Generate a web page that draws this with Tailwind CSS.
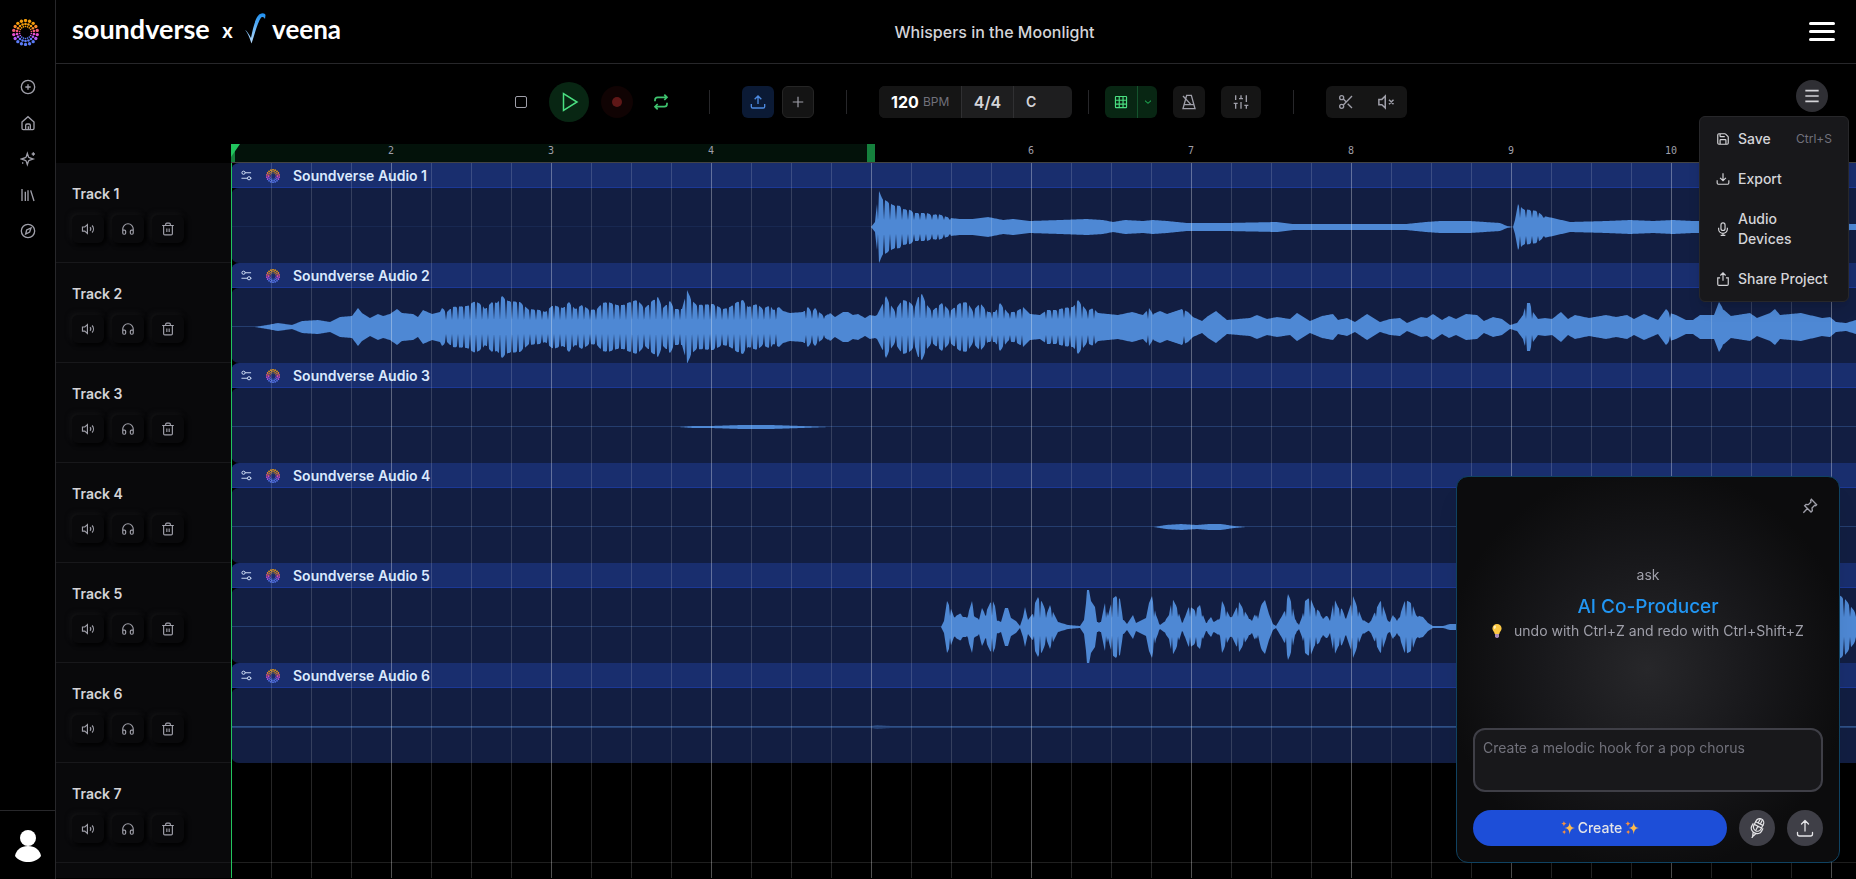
<!DOCTYPE html>
<html lang="en">
<head>
  <meta charset="UTF-8">
  <meta name="viewport" content="width=device-width, initial-scale=1.0">
  <title>Whispers in the Moonlight</title>
  <script src="https://cdn.jsdelivr.net/npm/@tailwindcss/browser@4"></script>
</head>
<body class="bg-black text-zinc-300 font-['Inter',sans-serif] text-sm h-screen overflow-hidden flex">

  <!-- icon sprite -->
  <svg class="hidden">
    <symbol id="i-plus-circle" viewBox="0 0 24 24"><circle cx="12" cy="12" r="10"/><path d="M8 12h8M12 8v8"/></symbol>
    <symbol id="i-home" viewBox="0 0 24 24"><path d="M3 10.500 12 2.500l9 8V20a2 2 0 0 1-2 2H5a2 2 0 0 1-2-2z"/><path d="M8.500 22v-6.500a2 2 0 0 1 2-2h3a2 2 0 0 1 2 2V22M12.500 17v5"/></symbol>
    <symbol id="i-sparkles" viewBox="0 0 24 24"><path d="M11 3.500 9.300 8.800a2 2 0 0 1-1.300 1.300L2.500 12l5.500 1.900a2 2 0 0 1 1.300 1.300L11 20.500l1.700-5.300a2 2 0 0 1 1.300-1.300l5.500-1.900-5.500-1.900a2 2 0 0 1-1.300-1.300z"/><path d="M20 2v5M22.500 4.500h-5M4 17v2M5 18H3"/></symbol>
    <symbol id="i-library" viewBox="0 0 24 24"><path d="m16 5 5 16M12 5v16M8 7v14M3 3v18"/></symbol>
    <symbol id="i-compass" viewBox="0 0 24 24"><circle cx="12" cy="12" r="10"/><path d="m16.500 7.500-2 6-6 3 1.500-6z"/></symbol>
    <symbol id="i-volume" viewBox="0 0 24 24"><path d="M11 4.500 6.500 8.500H2.500v7h4l4.500 4zM15.500 9a4.500 4.500 0 0 1 0 6M19 6a9 9 0 0 1 0 12"/></symbol>
    <symbol id="i-headphones" viewBox="0 0 24 24"><path d="M3 14h3a2 2 0 0 1 2 2v3a2 2 0 0 1-2 2H5a2 2 0 0 1-2-2v-7a9 9 0 0 1 18 0v7a2 2 0 0 1-2 2h-1a2 2 0 0 1-2-2v-3a2 2 0 0 1 2-2h3"/></symbol>
    <symbol id="i-trash" viewBox="0 0 24 24"><path d="M2 6h20M4.500 6v14a2 2 0 0 0 2 2h11a2 2 0 0 0 2-2V6M8 6V4a2 2 0 0 1 2-2h4a2 2 0 0 1 2 2v2M10 11v6M14 11v6"/></symbol>
    <symbol id="i-loop" viewBox="0 0 24 24"><path d="m17 1 4 4-4 4M3 11V9a4 4 0 0 1 4-4h14M7 23l-4-4 4-4M21 13v2a4 4 0 0 1-4 4H3"/></symbol>
    <symbol id="i-upload" viewBox="0 0 24 24"><path d="M12 15V3M7 8l5-5 5 5M2 15v4a2 2 0 0 0 2 2h16a2 2 0 0 0 2-2v-4"/></symbol>
    <symbol id="i-download" viewBox="0 0 24 24"><path d="M12 2v12M7 10l5 5 5-5M2 14v5a2 2 0 0 0 2 2h16a2 2 0 0 0 2-2v-5"/></symbol>
    <symbol id="i-share" viewBox="0 0 24 24"><path d="M12 15V2M7.500 6 12 1.500 16.500 6M7 10H3v11a2 2 0 0 0 2 2h14a2 2 0 0 0 2-2V10h-4"/></symbol>
    <symbol id="i-save" viewBox="0 0 24 24"><path d="M15.200 3a2 2 0 0 1 1.400.6l3.800 3.800a2 2 0 0 1 .6 1.400V19a2 2 0 0 1-2 2H5a2 2 0 0 1-2-2V5a2 2 0 0 1 2-2zM17 21v-7a1 1 0 0 0-1-1H8a1 1 0 0 0-1 1v7M7 3v4a1 1 0 0 0 1 1h7"/></symbol>
    <symbol id="i-mic" viewBox="0 0 24 24"><rect x="8.500" y="1.500" width="7" height="13" rx="3.500"/><path d="M4.500 10v2a7.500 7.500 0 0 0 15 0v-2M12 19.500V23M8 23h8"/></symbol>
    <symbol id="i-plus" viewBox="0 0 24 24"><path d="M12 3v18M3 12h18"/></symbol>
    <symbol id="i-grid" viewBox="0 0 24 24"><rect x="2.500" y="2.500" width="19" height="19" rx="1"/><path d="M2.500 9h19M2.500 15.500h19M9 2.500v19M15.500 2.500v19"/></symbol>
    <symbol id="i-chevron" viewBox="0 0 24 24"><path d="m3 8 9 8 9-8"/></symbol>
    <symbol id="i-metronome" viewBox="0 0 24 24"><path d="M8.500 2h7L21 22H3zM5 16h14M3 3l12 13"/></symbol>
    <symbol id="i-mixer" viewBox="0 0 24 24"><path d="M4 22v-8M4 9V2M12 22V12M12 7V2M20 22v-5M20 12V2M1 14h6M9 7h6M17 17h6"/></symbol>
    <symbol id="i-scissors" viewBox="0 0 24 24"><circle cx="5.500" cy="5.500" r="3"/><circle cx="5.500" cy="18.500" r="3"/><path d="M21 3 8 16.500M14.500 14.500 21 21M8 7.500l4.500 4.500"/></symbol>
    <symbol id="i-muted" viewBox="0 0 24 24"><path d="M11 4 6.500 8.500H2.500v7h4L11 20zM22 9l-6 6M16 9l6 6"/></symbol>
    <symbol id="i-menu" viewBox="0 0 24 24"><path d="M2 4h20M2 12h20M2 20h20"/></symbol>
    <symbol id="i-pin" viewBox="0 0 24 24"><path d="m14 2 8 8-1.500 1.500-1.500-.5-4 4 .5 4-2 2L4 11.500l2-2 3.500.5L13.500 6 13 3.500zM8.500 15.500 2 22"/></symbol>
    <symbol id="i-clip" viewBox="0 0 24 24"><circle cx="5.500" cy="6" r="3.500"/><path d="M9 6h13"/><circle cx="17.500" cy="18" r="3.500"/><path d="M1 18h13M21 18h2"/></symbol>
    <symbol id="i-stars" viewBox="0 0 24 24"><path fill="#fdba4d" d="M15 2c1 7 3 9 9 10-6 1-8 3-9 11-1-8-3-10-9-11 6-1 8-3 9-10z"/><path fill="#fb923c" d="M5 0c.5 3 1.500 4 4.500 4.500C6.500 5 5.500 6.500 5 9c-.5-2.500-1.500-4-4.500-4.500C3.500 4 4.500 3 5 0zM5.500 15c.5 2.500 1.500 3.500 4 4-2.500.5-3.500 1.500-4 4-.5-2.500-1.500-3.500-4-4 2.500-.5 3.500-1.500 4-4z"/></symbol>
    <!-- ring of dots, filled in by drawRing() -->
    <symbol id="i-ring" viewBox="0 0 52 52"></symbol>
  </svg>

  <nav class="w-14 shrink-0 border-r border-zinc-800 flex flex-col items-center">
    <a href="#" aria-label="Soundverse" class="pt-[19px] pr-1"><svg class="size-[27px]"><use href="#i-ring"/></svg></a>
    <div id="nav-links" class="mt-[33px] flex flex-col gap-5 text-zinc-400"></div>
    <a href="#" aria-label="Profile" class="mt-auto w-full h-[69px] border-t border-zinc-800 flex justify-center pt-[19px]">
      <svg class="w-[28px] h-8" viewBox="0 0 28 32" fill="#fff"><circle cx="14" cy="8" r="8"/><path d="M1 26C2 20 7 16 14 16s12 4 13 10c-3 4-8 6-13 6S4 30 1 26z"/></svg>
    </a>
  </nav>

  <div class="flex-1 min-w-0 flex flex-col">
    <header class="h-16 shrink-0 border-b border-zinc-800 grid grid-cols-[1fr_auto_1fr] items-center pl-4 pr-[21px]">
      <div class="flex items-center text-white font-['Lato',sans-serif] font-bold pb-[6px]">
        <span class="text-[27px] leading-8">soundverse</span>
        <span class="text-xl leading-8 ml-3 pt-1 font-['Inter',sans-serif] font-semibold">x</span>
        <svg class="w-[21px] h-[31px] ml-3" viewBox="0 0 21 31">
          <defs><linearGradient id="tick" x1="0" y1="0" x2="0" y2="1"><stop offset="0" stop-color="#1d8ff0"/><stop offset="1" stop-color="#b9dcfb"/></linearGradient></defs>
          <path fill="url(#tick)" d="M0 17c2 1 4 4 6 8C8 14 11 3 15 1c3-1.500 5-.5 5.500 1l-.5 4c-1-2-3-3-4.500-.5C12 11 9 24 6.500 30.500 5 26 3 20 0 17z"/>
        </svg>
        <span class="text-[26px] leading-8 ml-[6px]">veena</span>
      </div>
      <h1 class="text-base font-medium text-zinc-300 pl-[82px]">Whispers in the Moonlight</h1>
      <button aria-label="Menu" class="justify-self-end flex flex-col gap-[5px]">
        <span class="w-[26px] h-[3px] rounded bg-white"></span>
        <span class="w-[26px] h-[3px] rounded bg-white"></span>
        <span class="w-[26px] h-[3px] rounded bg-white"></span>
      </button>
    </header>

    <div class="relative h-20 shrink-0 flex justify-center pt-[18px]">
      <div class="h-10 flex items-center text-zinc-400">
        <button aria-label="Stop" class="size-8 flex items-center justify-center"><span class="size-3 border border-zinc-400 rounded-[2px]"></span></button>
        <button aria-label="Play" class="ml-3 size-10 rounded-full bg-[#082613] flex items-center justify-center">
          <svg class="size-5" viewBox="0 0 20 20" fill="none" stroke="#4ade80" stroke-width="1.500"><path d="M4.500 1.500v17L18 10z"/></svg>
        </button>
        <button aria-label="Record" class="ml-3 size-8 rounded-full bg-[#100303] flex items-center justify-center"><span class="size-[10px] rounded-full bg-[#5e1717]"></span></button>
        <button aria-label="Loop" class="ml-3 size-8 flex items-center justify-center"><svg class="size-4 fill-none stroke-[#3fc46f] stroke-[2.500]"><use href="#i-loop"/></svg></button>
        <span class="mx-8 w-px h-6 bg-zinc-800"></span>
        <button aria-label="Upload" class="size-8 rounded-md bg-[#0b1a35] flex items-center justify-center"><svg class="size-4 fill-none stroke-[#4d8ae0] stroke-2"><use href="#i-upload"/></svg></button>
        <button aria-label="Add" class="ml-2 size-8 rounded-md bg-[#141414] border border-[#252525] flex items-center justify-center"><svg class="size-[14px] fill-none stroke-zinc-400 stroke-2"><use href="#i-plus"/></svg></button>
        <span class="mx-8 w-px h-6 bg-zinc-800"></span>
        <div class="h-8 rounded-md bg-[#1e1e1f] flex items-stretch overflow-hidden text-zinc-300">
          <label class="w-[82px] bg-[#151515] flex items-center pl-3 text-xs text-zinc-500">
            <input value="120" class="w-8 text-base font-bold text-white bg-transparent outline-none">BPM
          </label>
          <button class="w-[53px] border-x border-[#303032] text-base font-semibold">4/4</button>
          <select aria-label="Key" class="w-[58px] pl-3 appearance-none bg-transparent font-semibold outline-none"><option>C</option></select>
        </div>
        <span class="mx-4 w-px h-6 bg-zinc-800"></span>
        <div class="h-8 rounded-md bg-[#082613] flex overflow-hidden">
          <button aria-label="Snap to grid" class="w-8 flex items-center justify-center"><svg class="size-[14px] fill-none stroke-[#4ade80] stroke-2"><use href="#i-grid"/></svg></button>
          <button aria-label="Grid size" class="w-5 border-l border-[#14532d] flex items-center justify-center"><svg class="size-2 fill-none stroke-[#22c55e] stroke-[3]"><use href="#i-chevron"/></svg></button>
        </div>
        <button aria-label="Metronome" class="ml-4 size-8 rounded-md bg-[#151515] flex items-center justify-center"><svg class="size-4 fill-none stroke-zinc-400 stroke-2"><use href="#i-metronome"/></svg></button>
        <button aria-label="Mixer" class="ml-4 w-10 h-8 rounded-md bg-[#151515] flex items-center justify-center"><svg class="size-4 fill-none stroke-zinc-400 stroke-2"><use href="#i-mixer"/></svg></button>
        <span class="mx-8 w-px h-6 bg-zinc-800"></span>
        <div class="h-8 w-[81px] rounded-md bg-[#151515] flex">
          <button aria-label="Split" class="w-10 flex items-center justify-center"><svg class="size-4 fill-none stroke-zinc-400 stroke-2"><use href="#i-scissors"/></svg></button>
          <button aria-label="Mute clip" class="w-10 flex items-center justify-center"><svg class="size-[18px] fill-none stroke-zinc-400 stroke-2"><use href="#i-muted"/></svg></button>
        </div>
      </div>

      <button aria-label="Project menu" class="absolute right-7 top-4 size-8 rounded-full bg-[#2f2f34] flex items-center justify-center"><svg class="size-4 fill-none stroke-zinc-300 stroke-[2.500]"><use href="#i-menu"/></svg></button>
      <div class="absolute z-20 right-[7px] top-[52px] w-[150px] rounded-md border border-zinc-800 bg-zinc-900 py-[2px] shadow-lg text-zinc-300 font-medium">
        <button class="w-full flex items-center gap-2 px-4 py-[10px] text-left"><svg class="size-[14px] shrink-0 fill-none stroke-current stroke-2"><use href="#i-save"/></svg>Save<span class="ml-auto text-xs font-normal text-zinc-500">Ctrl+S</span></button>
        <button class="w-full flex items-center gap-2 pl-4 py-[10px] text-left"><svg class="size-[14px] shrink-0 fill-none stroke-current stroke-2"><use href="#i-download"/></svg>Export</button>
        <button class="w-full flex items-center gap-2 pl-4 pr-10 py-[10px] text-left"><svg class="size-[14px] shrink-0 fill-none stroke-current stroke-2"><use href="#i-mic"/></svg>Audio Devices</button>
        <button class="w-full flex items-center gap-2 pl-4 py-[10px] text-left whitespace-nowrap"><svg class="size-[14px] shrink-0 fill-none stroke-current stroke-2"><use href="#i-share"/></svg>Share Project</button>
      </div>
    </div>

    <div class="flex-1 min-h-0 flex mb-px">
      <div class="w-[175px] shrink-0 mt-[19px] bg-[#09090b] overflow-hidden">
        <div id="tracks"></div>
      </div>

      <div class="flex-1 min-w-0 flex flex-col overflow-hidden">
        <div class="relative h-[19px] shrink-0 border-b border-[#444]">
          <div class="absolute left-0 inset-y-0 w-[644px] bg-[#03120a]">
            <span class="absolute left-0 inset-y-0 w-1 bg-[#15803d]"></span>
            <span class="absolute left-0 top-0 w-[9px] h-[13px] bg-[#22c55e] [clip-path:polygon(0_0,100%_0,0_100%)]"></span>
            <span class="absolute right-0 inset-y-0 w-2 bg-[#15803d]"></span>
          </div>
          <div id="ruler" class="relative flex pl-20 overflow-hidden text-[10px] leading-[14px] text-zinc-400 font-['DejaVu_Sans_Mono',monospace]"></div>
        </div>
        <div class="relative flex-1 min-h-0 overflow-hidden">
          <div id="clips"></div>
          <!-- beat and bar lines -->
          <div class="absolute inset-0 pointer-events-none bg-[repeating-linear-gradient(to_right,#ffffff26_0_1px,transparent_1px_40px)]"></div>
          <div class="absolute inset-0 pointer-events-none bg-[repeating-linear-gradient(to_right,#ffffff33_0_1px,transparent_1px_160px)]"></div>
          <div class="absolute left-0 inset-y-0 w-px bg-[#22c55e]"></div>
        </div>
      </div>
    </div>
  </div>

  <section class="fixed z-10 right-4 bottom-4 w-96 h-[387px] rounded-xl border border-[#0f4261] bg-[radial-gradient(circle_at_center,#27272a,#18181b_40%,#0c0c0d_75%)] p-4 flex flex-col shadow-xl">
    <button aria-label="Pin panel" class="self-end mr-[5px] mt-[5px]"><svg class="size-4 fill-none stroke-zinc-400 stroke-2"><use href="#i-pin"/></svg></button>
    <div class="flex-1 text-center pt-[51px]">
      <p class="leading-5 text-zinc-400">ask</p>
      <h2 class="mt-2 text-[19px] leading-7 font-medium text-[#2196f3]">AI Co-Producer</h2>
      <p class="leading-5 text-zinc-400 flex items-center justify-center gap-3">
        <svg class="w-[10px] h-[14px]" viewBox="0 0 10 14"><path fill="#fcc844" d="M5 0a4.600 4.600 0 0 1 4.600 4.600C9.600 7 7.500 8 7.300 10H2.700C2.500 8 .4 7 .4 4.600A4.600 4.600 0 0 1 5 0z"/><path fill="#fff3c0" d="M3.500 1.500a2 2 0 0 0-1.500 3l1 .5 1-2z"/><path fill="#a78bba" d="M3 10h4v3L5.500 14h-1L3 13z"/></svg>
        undo with Ctrl+Z and redo with Ctrl+Shift+Z
      </p>
    </div>
    <textarea aria-label="Prompt" placeholder="Create a melodic hook for a pop chorus" class="h-16 shrink-0 resize-none rounded-xl border-2 border-zinc-700 bg-zinc-900 px-2 py-2 leading-5 placeholder:text-zinc-500 outline-none"></textarea>
    <div class="mt-[18px] flex gap-3">
      <button class="flex-1 h-9 rounded-full bg-[#1d4ed8] text-zinc-200 font-medium flex items-center justify-center gap-[3px]">
        <svg class="size-[14px]"><use href="#i-stars"/></svg>Create<svg class="size-[14px]"><use href="#i-stars"/></svg>
      </button>
      <button aria-label="Record voice" class="size-9 rounded-full bg-zinc-700 flex items-center justify-center">
        <svg class="w-4 h-5 fill-none stroke-zinc-200" viewBox="0 0 16 20" stroke-width="1.200" stroke-linecap="round"><g transform="rotate(27 8 10)"><rect x="4" y="0" width="8" height="13" rx="4"/><path d="M6.800 .5v4M9.200 .5v4M4 5h8M4 8h8M8 8v4M2.500 8v3a5.500 4.500 0 0 0 11 0V8M6.500 15.500h3l-1 3h-1zM8 18v3"/></g></svg>
      </button>
      <button aria-label="Upload audio" class="size-9 rounded-full bg-zinc-700 flex items-center justify-center">
        <svg class="size-[18px] fill-none stroke-zinc-200" viewBox="0 0 18 18" stroke-width="1.300" stroke-linecap="round" stroke-linejoin="round"><path d="M9 12V1.500M5.500 5 9 1.500 12.500 5M1.500 13.500V15a2 2 0 0 0 2 2h11a2 2 0 0 0 2-2v-1.500"/></svg>
      </button>
    </div>
  </section>

  <script>
    // waveform peaks per track: x, height, x, height, ... (px from the timeline start)
    const PEAKS = [
      [0,0,640,0,644,5,646,24,647,26,648,36,651,29,657,25,662,22,669,21,672,18,679,17,684,14,696,14,701,12,707,13,719,9,729,8,742,8,757,10,772,7,782,8,799,6,829,7,856,8,872,7,882,5,894,7,912,6,922,7,936,6,956,4,996,4,1046,5,1062,3,1175,3,1195,5,1209,6,1239,6,1269,4,1276,1,1282,0,1284,7,1287,23,1292,18,1306,16,1312,11,1322,9,1339,5,1376,6,1399,7,1422,6,1442,7,1462,6,1625,3],
      [0,0,24,0,36,2,47,4,61,2,71,6,87,7,99,5,109,10,121,11,127,19,131,14,139,9,147,13,152,11,159,13,166,18,171,14,182,13,187,10,192,17,201,13,209,15,211,19,216,15,221,20,236,21,244,26,251,22,254,18,261,25,266,24,271,31,277,26,289,25,297,18,309,17,314,15,322,22,332,19,338,25,344,18,351,22,359,17,366,18,371,24,377,25,386,22,392,22,399,25,406,27,414,19,421,26,427,30,432,19,439,26,444,18,451,18,456,37,461,26,466,22,482,23,492,18,499,20,506,25,512,27,517,20,526,23,532,18,539,22,542,17,548,20,552,16,559,14,572,15,577,20,581,15,584,19,589,14,594,11,599,14,604,10,612,15,617,15,622,12,627,13,634,9,639,12,644,11,646,12,651,22,655,31,659,23,664,16,671,27,677,26,684,20,687,30,691,33,696,22,701,16,711,24,719,16,729,24,736,25,742,16,749,24,757,15,764,15,769,24,777,14,786,16,792,20,799,13,809,12,816,17,826,17,832,19,842,20,847,27,856,16,862,19,867,14,887,12,901,15,912,12,918,19,922,13,929,16,936,13,951,18,957,15,962,10,971,6,977,11,985,16,996,7,1019,9,1026,12,1036,8,1046,10,1059,8,1066,14,1079,6,1091,11,1102,13,1107,7,1116,9,1124,5,1136,13,1149,5,1159,8,1169,9,1176,4,1190,10,1196,9,1202,13,1211,7,1218,11,1225,8,1235,13,1246,12,1253,6,1262,10,1271,8,1279,2,1286,4,1292,12,1295,24,1299,24,1302,15,1307,8,1314,9,1321,8,1330,15,1337,8,1344,12,1358,9,1375,12,1385,10,1396,12,1403,8,1413,13,1427,7,1435,18,1439,14,1445,12,1455,7,1462,7,1469,12,1483,12,1488,25,1493,17,1500,11,1519,14,1526,9,1539,14,1544,18,1549,12,1570,14,1591,9,1599,10,1605,5,1615,4,1625,7],
      [0,0,448,0,462,1,480,1,510,2,540,2,570,1,598,0,1625,0],
      [0,0,923,0,935,2,950,3,966,2,978,3,990,3,1003,1,1015,0,1625,0],
      [0,0,710,0,713,6,716,26,719,21,723,10,730,14,732,10,736,10,741,26,744,10,748,8,751,19,754,13,761,28,764,21,766,7,770,5,774,19,777,19,780,9,785,6,789,1,792,10,794,20,797,7,802,14,803,22,807,30,811,25,816,14,819,22,823,13,827,5,837,2,849,1,853,7,855,24,856,37,858,37,860,26,864,20,866,5,870,5,874,25,877,11,881,28,885,31,889,28,892,8,896,3,902,12,905,4,915,9,918,24,921,31,925,12,929,2,933,5,938,12,941,29,946,20,951,4,954,10,958,21,964,17,969,22,972,12,975,4,980,10,983,5,989,9,991,26,995,18,999,10,1002,12,1008,25,1013,17,1018,9,1021,6,1025,16,1027,8,1030,22,1034,27,1038,13,1042,3,1045,1,1051,11,1054,17,1057,33,1061,24,1064,8,1068,2,1071,10,1074,26,1079,30,1083,20,1088,16,1092,8,1096,12,1099,6,1103,29,1107,20,1111,18,1115,8,1119,20,1122,31,1126,21,1131,8,1137,4,1140,6,1145,18,1150,27,1154,15,1157,6,1159,5,1162,13,1166,6,1169,12,1174,27,1181,24,1185,12,1192,10,1197,4,1202,1,1212,1,1219,3,1225,3,1300,20,1600,20,1608,32,1614,28,1625,14],
      [0,1,640,1,646,2,660,1,1625,1]
    ];
    // [track, from, to, depth] stretches where single cycles show as teeth
    const TEETH = [
      [0, 645, 719, 7], [0, 1287, 1313, 9],
      [1, 210, 548, 7], [1, 572, 598, 8], [1, 650, 795, 8], [1, 815, 866, 8], [1, 914, 922, 8], [1, 950, 953, 9], [1, 1292, 1302, 8], [1, 1434, 1441, 9], [1, 1488, 1492, 7],
      [4, 716, 770, 11], [4, 800, 825, 9], [4, 868, 892, 9], [4, 918, 1030, 10], [4, 1054, 1190, 10], [4, 1608, 1625, 10]
    ];

    function heightAt(peaks, x) {
      let i = 2;
      while (i < peaks.length - 2 && peaks[i] < x) i += 2;
      const t = (x - peaks[i - 2]) / (peaks[i] - peaks[i - 2]);
      return peaks[i - 1] + (peaks[i + 1] - peaks[i - 1]) * Math.min(t, 1);
    }

    function wavePath(track) {
      const top = [], bottom = [];
      for (let x = 0; x <= 1625; x++) {
        let h = heightAt(PEAKS[track], x);
        const teeth = TEETH.find(t => t[0] === track && x >= t[1] && x <= t[2]);
        if (teeth && x % 6 === 5) h = Math.min(h, teeth[3]);
        // flat-topped cycle between two notches
        if (teeth && x % 6 === 4) h = Math.max(h - 1, 0);
        top.push(`${x},${40 - h}`);
        bottom.unshift(`${x},${40 + h}`);
      }
      return `M${top.join('L')}L${bottom.join('L')}Z`;
    }

    function drawRing() {
      const stops = ['#f59e0b', '#f98a2b', '#f05a78', '#e84fd0', '#b45cf5', '#5b7cf8'];
      let dots = '';
      [[23, 3.2], [16.5, 2.5], [11.5, 1.6]].forEach(([r, size]) => {
        for (let i = 0; i < 18; i++) {
          const a = i * Math.PI / 9;
          const y = 26 - r * Math.cos(a);
          const c = stops[Math.min(5, Math.floor((1 - Math.cos(a)) / 2 * 6))];
          dots += `<circle cx="${26 + r * Math.sin(a)}" cy="${y}" r="${size}" fill="${c}" stroke="none"/>`;
        }
      });
      document.getElementById('i-ring').innerHTML = dots;
    }

    function iconButton(icon, label) {
      return `<button aria-label="${label}" class="w-8 h-7 rounded-md bg-[#09090b] shadow-[2px_2px_5px_#000,-2px_-2px_5px_#141416] flex items-center justify-center"><svg class="size-[14px] fill-none stroke-zinc-400 stroke-2"><use href="#${icon}"/></svg></button>`;
    }

    drawRing();

    document.getElementById('nav-links').innerHTML = [
      ['i-plus-circle', 'New'], ['i-home', 'Home'], ['i-sparkles', 'Create'], ['i-library', 'Library'], ['i-compass', 'Explore']
    ].map(([icon, label]) => `<a href="#" aria-label="${label}"><svg class="size-4 fill-none stroke-current stroke-2"><use href="#${icon}"/></svg></a>`).join('');

    document.getElementById('tracks').innerHTML = [1, 2, 3, 4, 5, 6, 7].map(n => `
      <div class="h-[100px] border-b border-[#18181b] pl-4 pt-[21px]">
        <h3 class="leading-5 font-semibold text-zinc-300">Track ${n}</h3>
        <div class="mt-[11px] flex gap-2">
          ${iconButton('i-volume', 'Mute')}${iconButton('i-headphones', 'Solo')}${iconButton('i-trash', 'Delete')}
        </div>
      </div>`).join('');

    document.getElementById('ruler').innerHTML = [2, 3, 4, 5, 6, 7, 8, 9, 10, 11]
      .map(n => `<span class="w-40 shrink-0 text-center">${n === 5 ? '' : n}</span>`).join('');

    document.getElementById('clips').innerHTML = PEAKS.map((_, i) => `
      <article class="h-[100px]">
        <div class="h-[25px] rounded-tl-lg bg-[#192e6e] shadow-[inset_0_-1px_#1b3896] flex items-center pl-[10px] text-[#dbeafe]">
          <svg class="size-[11px] fill-none stroke-current stroke-2"><use href="#i-clip"/></svg>
          <svg class="ml-[14px] size-[14px]"><use href="#i-ring"/></svg>
          <span class="ml-[13px] font-semibold leading-5">Soundverse Audio ${i + 1}</span>
        </div>
        <svg class="block w-full h-[75px] rounded-l-lg bg-[#121e42]" viewBox="0 1 1625 75" preserveAspectRatio="xMinYMin slice">
          <rect y="39" width="1625" height="1" fill="#4e88d4" fill-opacity="${i === 5 ? 0.2 : i === 0 ? 0.1 : 0.3}"/>
          <path d="${wavePath(i)}" fill="#4e88d4" fill-opacity="${i === 5 ? 0.35 : 1}"/>
        </svg>
      </article>`).join('') + '<div class="h-[100px] border-b border-[#1f1f1f]"></div>';
  </script>
</body>
</html>
